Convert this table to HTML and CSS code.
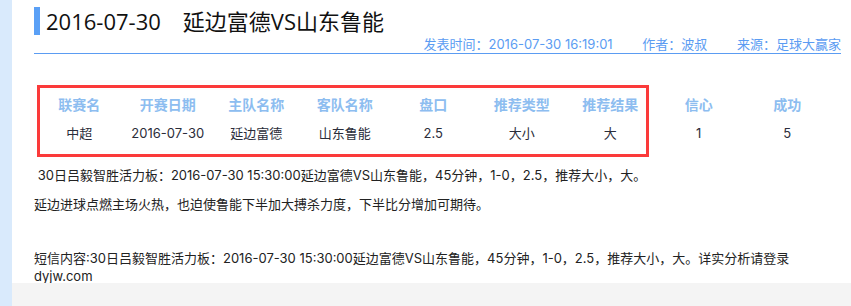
FILE: index.html
```html
<!DOCTYPE html>
<html lang="zh-CN">
<head>
<meta charset="utf-8">
<title>2016-07-30 延边富德VS山东鲁能</title>
<link rel="stylesheet" href="styles.css">
</head>
<body>
<div class="page">
  <div class="rail"></div>
  <div class="main">
    <div class="article">
      <h1 class="title">2016-07-30　延边富德VS山东鲁能</h1>
      <div class="meta">
        <span>发表时间：2016-07-30 16:19:01</span>
        <span class="gap">作者：波叔</span>
        <span class="gap">来源：足球大赢家</span>
      </div>
      <div class="table-wrap">
        <div class="grid head">
          <div>联赛名</div><div>开赛日期</div><div>主队名称</div><div>客队名称</div><div>盘口</div><div>推荐类型</div><div>推荐结果</div><div>信心</div><div>成功</div>
        </div>
        <div class="grid row">
          <div>中超</div><div>2016-07-30</div><div>延边富德</div><div>山东鲁能</div><div>2.5</div><div>大小</div><div>大</div><div>1</div><div>5</div>
        </div>
        <div class="mark"></div>
      </div>
      <p class="p1">&nbsp;30日吕毅智胜活力板：2016-07-30 15:30:00延边富德VS山东鲁能，45分钟，1-0，2.5，推荐大小，大。</p>
      <p class="p2">延边进球点燃主场火热，也迫使鲁能下半加大搏杀力度，下半比分增加可期待。</p>
      <p class="p3">短信内容:30日吕毅智胜活力板：2016-07-30 15:30:00延边富德VS山东鲁能，45分钟，1-0，2.5，推荐大小，大。详实分析请登录dyjw.com</p>
    </div>
    <div class="footer"></div>
  </div>
</div>
</body>
</html>
```

FILE: styles.css
```css
html, body {
  margin: 0;
  padding: 0;
  background: #ffffff;
}
body {
  font-family: Inter, "Noto Sans CJK SC", sans-serif;
  color: #222222;
}
.page {
  display: flex;
  min-height: 306px;
}
.rail {
  width: 12px;
  flex: none;
  background: #d9eafc;
}
.main {
  flex: 1;
  display: flex;
  flex-direction: column;
}
.article {
  padding: 7px 10px 0 22px;
  height: 283px;
  box-sizing: border-box;
}
.title {
  margin: 0;
  border-left: 6px solid #5aa0f6;
  padding-left: 6px;
  font-family: "Open Sans", "Noto Sans CJK SC", sans-serif;
  font-size: 22px;
  font-weight: normal;
  line-height: 28px;
  height: 28px;
  color: #111111;
  white-space: nowrap;
}
.meta {
  margin-top: 1px;
  text-align: right;
  font-size: 13px;
  line-height: 17px;
  color: #5b9cf2;
  border-bottom: 1px solid #5b9cf2;
}
.meta .gap {
  margin-left: 26px;
}
.table-wrap {
  position: relative;
  margin-top: 31px;
  margin-left: 1px;
  padding: 4px 0 10px;
}
.grid {
  display: grid;
  grid-template-columns: repeat(9, 88.5px);
  text-align: center;
  height: 29px;
  align-items: center;
}
.head {
  font-size: 14px;
  font-weight: bold;
  color: #8dbdf0;
}
.row {
  font-size: 13px;
  color: #2b2d3a;
}
.mark {
  position: absolute;
  left: 2px;
  top: 0;
  width: 612px;
  height: 72px;
  box-sizing: border-box;
  border: 3px solid #fb3a3a;
}
p {
  margin: 0;
  font-size: 13px;
  line-height: 18px;
}
.p1 {
  margin-top: 9px;
}
.p2 {
  margin-top: 11px;
}
.p3 {
  margin-top: 36px;
}
.footer {
  flex: 1;
  background: #f4f4f4;
}
```
